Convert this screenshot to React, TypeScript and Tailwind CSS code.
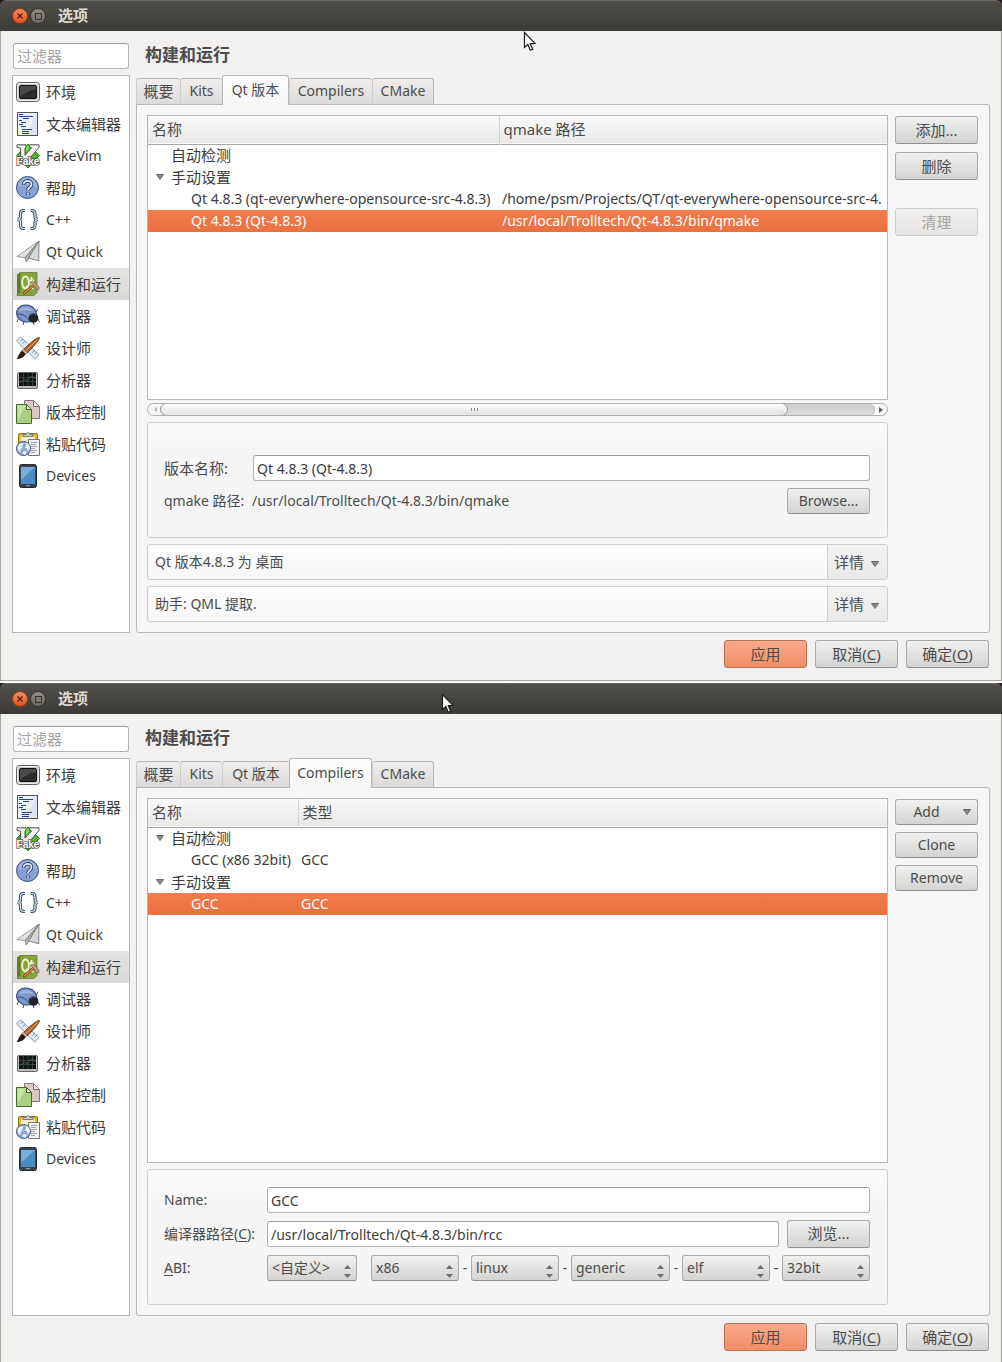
import { useState } from 'react'
import { useId } from 'react'
import type { ReactNode } from 'react'

/* ---------- sidebar icons ---------- */

const svgBase = { width: 24, height: 24, viewBox: '0 0 24 24', 'aria-hidden': true, className: 'shrink-0' } as const

function MonitorIcon() {
  return (
    <svg {...svgBase}>
      <rect x="0.5" y="2.5" width="23" height="19" rx="3" fill="#c9c9c9" stroke="#5d5d5f" />
      <rect x="1.5" y="3.5" width="21" height="17" rx="2" fill="none" stroke="#f1f1f1" />
      <rect x="3.5" y="5.5" width="17" height="13" rx="1.5" fill="#2c2c2c" stroke="#111" />
      <path d="M4 6h16v3C14 10 8 13 4 17z" fill="#5b5b5b" opacity=".65" />
    </svg>
  )
}

function EditorIcon() {
  return (
    <svg {...svgBase}>
      <rect x="1.5" y="0.5" width="20" height="23" fill="#ecf0f7" stroke="#50545c" />
      <path d="M21 1v22H9z" fill="#d3dbe9" opacity=".6" />
      <path
        d="M3 2.5h4M3 4.5h14M7 6.5h6M3 8.5h3M5 10.5h5M3 12.5h4M5 14.500h5M6 17.500h10M6 19.500h7M6 21.500h7"
        stroke="#24438a"
        fill="none"
      />
    </svg>
  )
}

function VimIcon() {
  return (
    <svg {...svgBase}>
      <path d="M12 0l11.500 11.500L12 24 .5 11.500z" fill="#4db52b" stroke="#1e5a14" strokeWidth=".8" />
      <path d="M11 1l3 2-4 6V2z" fill="#7be04a" />
      <path
        d="M1 .8h9v2.600l-1 .8v7l6.500-7.400-1.900-.4V.8h9.400v2.600L9 20H4.600V4.200L1 3.400z"
        fill="#efefef"
        stroke="#4c5250"
      />
      <text
        x="12"
        y="21"
        textAnchor="middle"
        fontFamily="Liberation Sans"
        fontSize="10"
        fontWeight="bold"
        fill="#fff"
        stroke="#565b58"
        strokeWidth="1.600"
        paintOrder="stroke"
      >
        Fake
      </text>
    </svg>
  )
}

function HelpIcon() {
  return (
    <svg {...svgBase}>
      <circle cx="11.500" cy="11.500" r="11" fill="#86a0d3" stroke="#3a4d7c" />
      <path d="M2 11a9.500 9.500 0 0 1 19 0c-6-2-12-2-19 0z" fill="#a9bde4" opacity=".7" />
      <path
        d="M7.500 9c0-5.500 8-5.500 8-.8 0 3-3.500 3-3.500 6M12 16.500v2.500"
        fill="none"
        stroke="#2b3c66"
        strokeWidth="3.600"
      />
      <path
        d="M7.500 8.500c.5-5 8-4.800 8-.3 0 3-3.500 3-3.500 6M12 16.800v1.900"
        fill="none"
        stroke="#dfe8f8"
        strokeWidth="1.800"
      />
    </svg>
  )
}

function BracesIcon() {
  const d =
    'M9 2.500H7.500C5 2.500 4.500 4 4.500 6v2.500c0 2-.8 3-3 3 2.200 0 3 1 3 3V17c0 2 .5 3.500 3 3.500H9M14.500 2.500H16c2.500 0 3 1.500 3 3.500v2.500c0 2 .8 3 3 3-2.200 0-3 1-3 3V17c0 2-.5 3.500-3 3.500h-1.500'
  return (
    <svg {...svgBase}>
      <path d={d} fill="none" stroke="#3c5576" strokeWidth="3.200" />
      <path d={d} fill="none" stroke="#d3dfee" strokeWidth="1.200" />
    </svg>
  )
}

function PlaneIcon() {
  return (
    <svg {...svgBase}>
      <path d="M23 1L.8 16.500l8.400 1.200z" fill="#e2e2e2" stroke="#8a8a8a" strokeWidth=".8" />
      <path d="M23 1L9.200 17.700l1 4.300 2.800-3.800z" fill="#b2b2b2" stroke="#777" strokeWidth=".8" />
      <path d="M23 1L12.500 18 22.800 20.800z" fill="#d6d6d6" stroke="#6f6f6f" strokeWidth=".8" />
    </svg>
  )
}

function BuildIcon() {
  return (
    <svg {...svgBase}>
      <path d="M1 2.500L4 .5v20l-3 3z" fill="#5f7e25" />
      <path d="M4 .5h17v20l-3 3H1l3-3z" fill="#86a63c" stroke="#587425" strokeWidth=".7" />
      <ellipse cx="9.500" cy="10.500" rx="3.300" ry="6" fill="none" stroke="#f3f4dc" strokeWidth="1.800" />
      <path d="M10 14l2.500 3.500M15.500 5v10c0 1.500 1 1.500 2 1.500M13.500 8.500h4.500" fill="none" stroke="#f3f4dc" strokeWidth="1.800" />
      <path d="M8.500 21l9-8" stroke="#6b3a12" strokeWidth="3" strokeLinecap="round" />
      <path d="M8.500 21l9-8" stroke="#d98e48" strokeWidth="1.600" strokeLinecap="round" />
      <path d="M14.500 10.500l2-1.500 6.500 6-.3 2.800-2-.3-1.700-3z" fill="#c6a487" stroke="#6d5646" strokeWidth=".7" />
    </svg>
  )
}

function BugIcon() {
  return (
    <svg {...svgBase}>
      <path d="M3 13l-2 5M8 17l-1 4M20 8l2-3M22 15l1.500 3M17 18l1 3" stroke="#4a4a4a" fill="none" />
      <ellipse cx="10.500" cy="9.500" rx="10" ry="8.500" transform="rotate(14 10.500 9.500)" fill="#7c98cb" stroke="#2f4675" />
      <path d="M3 7c3-5 10-5 15 0-6-1-9-1-15 0z" fill="#a9bde2" opacity=".8" />
      <path d="M1.500 10c6 0 9 2 12 7" fill="none" stroke="#2f4675" />
      <circle cx="17.500" cy="14" r="4.800" fill="#20242e" />
      <path d="M14 12c1-2.500 4-3 6-1" stroke="#5d6982" fill="none" />
    </svg>
  )
}

function DesignIcon() {
  return (
    <svg {...svgBase}>
      <path d="M4.500.8L23 18.500 18.800 23 .5 5z" fill="#dfe7f2" stroke="#8290a8" strokeWidth=".9" />
      <path d="M6.500 3L5 4.500M9 5.500L7 7.500M16 12l-1.500 1.500M18.500 14.500l-2 2M20.500 16.500L19 18" stroke="#64748f" />
      <path d="M23.500 1.500C23 5 16 12 11 17l-3.500-3.500C12 9 20 1.500 23.500 1.500z" fill="#b2622a" stroke="#54270d" strokeWidth=".8" />
      <path d="M21.500 3.500L10 14.500" stroke="#eba86c" />
      <path d="M7.500 13l3.500 3.500-1.500 1.700-3.500-3.500z" fill="#c8c8c8" stroke="#555" strokeWidth=".6" />
      <path d="M6 14.500l3.700 3.500C8 21.500 4.500 23 .5 23c2-2.500 2.500-6 5.500-8.500z" fill="#2b1a10" />
    </svg>
  )
}

function AnalyzerIcon() {
  return (
    <svg {...svgBase}>
      <rect x="1.500" y="4.500" width="20" height="16" rx="1.500" fill="#bdbdbd" stroke="#666" />
      <rect x="3" y="5" width="17" height="13" fill="#101413" />
      <path d="M7.500 5v13M12 5v13M16.500 5v13M3 9.500h17M3 13.500h17" stroke="#3c4a46" strokeWidth=".8" />
      <path d="M4 15l4-4 3 2 4-5 5 2" stroke="#4c665d" strokeWidth=".8" fill="none" />
    </svg>
  )
}

function VersionIcon() {
  return (
    <svg {...svgBase}>
      <path d="M8.500.5h9l6 6v12h-15z" fill="#dbc5c5" stroke="#8b7474" />
      <path d="M17.500.5v6h6z" fill="#f3e8e8" stroke="#8b7474" />
      <path d="M.5 4.500h10l5 5v14H.5z" fill="#a9d080" stroke="#456b2a" />
      <path d="M1.500 5.500h8L2 20z" fill="#cde9ae" opacity=".8" />
      <path d="M10.500 4.500v5h5z" fill="#e5f5d4" stroke="#456b2a" />
    </svg>
  )
}

function PasteIcon() {
  return (
    <svg {...svgBase}>
      <rect x="2.500" y="1.500" width="19" height="20" rx="1.500" fill="#e5b733" stroke="#92701b" />
      <rect x="5" y="4.500" width="14" height="14" fill="#fbeec2" />
      <path d="M7 4.500V2.500h3c0-2.500 4-2.500 4 0h3v2z" fill="#c9cbd0" stroke="#646870" strokeWidth=".8" />
      <path d="M12.500 7.500h11v16h-11z" fill="#f1f1f1" stroke="#777" />
      <path d="M15 10.500h6M15 12.500h5M15 14.500h6M15 16.500h4M15 18.500h6M15 20.500h4" stroke="#a3a3a3" />
      <circle cx="7.500" cy="16.500" r="7" fill="#8ea9cf" stroke="#3e567e" />
      <path
        d="M1.500 15c1-3 3-4 5-4l1 2-2 1 1 2-2 1v3l-2-1zM9.500 10.500c3 1 4.500 3 4.500 6l-2 3-1-3-2-1 1-2zM6 21l2-2 3 1-2 3z"
        fill="#eef3f9"
      />
    </svg>
  )
}

function DeviceIcon() {
  return (
    <svg {...svgBase}>
      <rect x="3.500" y=".5" width="17" height="23" rx="2" fill="#39434f" stroke="#252b33" />
      <rect x="5" y="3" width="14" height="17" fill="#4a8cc4" />
      <path d="M5 3h14L5 16z" fill="#8abbe2" opacity=".7" />
      <path d="M10 21.700h4" stroke="#9aa4b0" />
    </svg>
  )
}

const categories: { label: string; icon: () => ReactNode }[] = [
  { label: '环境', icon: MonitorIcon },
  { label: '文本编辑器', icon: EditorIcon },
  { label: 'FakeVim', icon: VimIcon },
  { label: '帮助', icon: HelpIcon },
  { label: 'C++', icon: BracesIcon },
  { label: 'Qt Quick', icon: PlaneIcon },
  { label: '构建和运行', icon: BuildIcon },
  { label: '调试器', icon: BugIcon },
  { label: '设计师', icon: DesignIcon },
  { label: '分析器', icon: AnalyzerIcon },
  { label: '版本控制', icon: VersionIcon },
  { label: '粘贴代码', icon: PasteIcon },
  { label: 'Devices', icon: DeviceIcon },
]

/* ---------- small parts ---------- */

function Triangle() {
  return (
    <svg width="8" height="6" viewBox="0 0 8 6" aria-hidden className="shrink-0">
      <path d="M.5.5h7L4 5.500z" fill="#8b8b89" stroke="#5c5c5a" strokeWidth=".9" />
    </svg>
  )
}

function Pointer({ className }: { className: string }) {
  return (
    <svg width="14" height="21" viewBox="0 0 14 21" aria-hidden className={`pointer-events-none absolute ${className}`}>
      <path d="M1.500 1.500v15l3.300-3 2.500 5.700 2.400-1-2.500-5.500 4.800-.3z" fill="#fff" stroke="#1c1c1c" strokeWidth="1.200" />
    </svg>
  )
}

const buttonLook = 'rounded-[3px] border bg-linear-to-b text-[#4c4c4c]'
const greyLook = 'border-[#a9a9a8] border-b-[#8f8f8d] from-[#f1f1f0] to-[#d3d3d2]'

function Button({
  children,
  tone = 'grey',
  className = 'h-7 text-[15px]',
}: {
  children: ReactNode
  tone?: 'grey' | 'orange' | 'off'
  className?: string
}) {
  const tones = {
    grey: greyLook,
    orange: 'border-[#b27457] from-[#f9aa8c] to-[#f18d65]',
    off: 'border-[#cfcecd] from-[#f0efee] to-[#e6e5e4] text-[#a5a5a4]',
  }
  return (
    <button
      type="button"
      disabled={tone === 'off'}
      className={`flex w-[83px] shrink-0 items-center justify-center whitespace-nowrap ${buttonLook} ${tones[tone]} ${className}`}
    >
      {children}
    </button>
  )
}

function TextField({ id, value, className }: { id: string; value: string; className: string }) {
  return (
    <input
      id={id}
      type="text"
      defaultValue={value}
      className={`h-[26px] min-w-0 rounded-[3px] border border-[#b5b3b1] border-t-[#9f9d9b] bg-white px-[3px] text-sm text-[#3c3c3c] outline-none ${className}`}
    />
  )
}

function Combo({ label, value, className }: { label: string; value: string; className: string }) {
  return (
    <span className={`relative ${className}`}>
      <select
        aria-label={label}
        defaultValue={value}
        className={`h-[26px] w-full appearance-none pr-4 pl-1 text-sm outline-none ${buttonLook} ${greyLook}`}
      >
        <option>{value}</option>
      </select>
      <svg width="7" height="13" viewBox="0 0 7 13" aria-hidden className="pointer-events-none absolute right-1.5 bottom-[3px]">
        <path d="M3.500 0L7 4H0zM3.500 13L7 9H0z" fill="#6e6e6c" />
      </svg>
    </span>
  )
}

function GroupBox({ children, className }: { children: ReactNode; className: string }) {
  return (
    <div className={`flex flex-col rounded-[3px] border border-[#d0cfce] bg-linear-to-b from-[#fbfbfb] to-[#f5f5f5] to-30% pr-[17px] pl-4 text-[#4c4c4c] ${className}`}>
      {children}
    </div>
  )
}

/* ---------- tree table ---------- */

type Row = { name: string; value?: string; kind: 'group' | 'empty' | 'leaf' | 'selected' }

function Tree({ heads, rows, firstCol, className }: { heads: string[]; rows: Row[]; firstCol: string; className: string }) {
  return (
    <div className={`overflow-hidden border border-[#b9b7b5] bg-white ${className}`}>
      <table className="w-full table-fixed border-collapse text-left text-sm whitespace-nowrap text-[#3c3c3c]">
        <colgroup>
          <col className={firstCol} />
          <col />
        </colgroup>
        <thead>
          <tr className="h-7 border-b border-[#a9a7a5] bg-linear-to-b from-[#f9f9f9] to-[#e9e8e7] text-[#4c4c4c]">
            <th className="border-r border-[#d2d1cf] p-0 pl-1 text-[15px] font-normal">{heads[0]}</th>
            <th className="p-0 pl-1 text-[15px] font-normal">{heads[1]}</th>
          </tr>
        </thead>
        <tbody>
          {rows.map((row, i) => (
            <tr
              key={i}
              className={row.kind === 'selected' ? 'h-[22px] bg-linear-to-b from-[#f27c4c] to-[#eb7040] text-white' : 'h-[22px]'}
            >
              {row.kind === 'group' || row.kind === 'empty' ? (
                <td className="p-0 text-[15px] leading-5">
                  <span className="flex items-center">
                    <span className="flex w-[23px] pl-2">{row.kind === 'group' && <Triangle />}</span>
                    {row.name}
                  </span>
                </td>
              ) : (
                <td className="p-0 pl-[43px] leading-[22px]">{row.name}</td>
              )}
              <td className="overflow-hidden p-0 pl-[3px] leading-[22px]">{row.value}</td>
            </tr>
          ))}
        </tbody>
      </table>
    </div>
  )
}

/* ---------- dialog frame ---------- */

const tabNames = [
  { label: '概要', width: 'w-[44px]' },
  { label: 'Kits', width: 'w-[42px]' },
  { label: 'Qt 版本', width: 'w-[67px]' },
  { label: 'Compilers', width: 'w-[83px]' },
  { label: 'CMake', width: 'w-[62px]' },
]

function Dialog({ active, children }: { active: string; children: ReactNode }) {
  const [filter, setFilter] = useState('')
  return (
    <section className="bg-[#241a26]">
      <header className="flex h-[31px] items-center rounded-t-md border-t border-[#6a6862] bg-linear-to-b from-[#504f49] to-[#3c3b37] pl-3">
        <button type="button" aria-label="关闭" className="flex size-4 items-center justify-center rounded-full border border-[#8d3a1c] bg-linear-to-b from-[#f58a62] to-[#e3501f]">
          <svg width="6" height="6" viewBox="0 0 6 6" aria-hidden>
            <path d="M.5.5l5 5M5.500.5l-5 5" stroke="#4b2010" strokeWidth="1.200" />
          </svg>
        </button>
        <button type="button" aria-label="最大化" className="ml-0.5 flex size-4 items-center justify-center rounded-full border border-[#35342f] bg-linear-to-b from-[#8f8d85] to-[#6b6962]">
          <span className="size-[7px] border border-[#35342f]" />
        </button>
        <h1 className="ml-3 pb-0.5 text-[15px] font-bold text-[#dfdbd2]">选项</h1>
      </header>
      <div className="flex flex-col border-x border-b border-[#a5a39f] bg-[#f2f1f0] px-[11px] pt-3 pb-3">
        <div className="flex gap-1.5">
          <aside className="flex w-[118px] shrink-0 flex-col">
            <input
              aria-label="过滤器"
              type="text"
              value={filter}
              onChange={(e) => setFilter(e.target.value)}
              placeholder="过滤器"
              className="mx-px h-[26px] w-[116px] rounded-[3px] border border-[#b5b3b1] border-t-[#9f9d9b] bg-white px-[3px] pb-0.5 font-['Noto_Sans_CJK_SC',sans-serif] text-[15px] leading-[22px] outline-none placeholder:text-[#a3a2a1]"
            />
            <nav className="mt-1.5 flex-1 border border-[#b9b7b5] bg-white">
              <ul>
                {categories.map(({ label, icon: Icon }) => (
                  <li key={label}>
                    <a
                      href="#"
                      className={`flex h-8 items-center gap-1.5 pl-[3px] whitespace-nowrap text-[#3c3c3c] ${
                        /^[A-Z]/.test(label) ? 'text-sm' : 'text-[15px]'
                      } ${label === '构建和运行' ? 'bg-linear-to-b from-[#e6e5e3] to-[#d9d7d5]' : ''}`}
                    >
                      <Icon />
                      {label}
                    </a>
                  </li>
                ))}
              </ul>
            </nav>
          </aside>
          <main className="flex min-w-0 flex-1 flex-col">
            <h2 className="h-8 pl-[9px] text-[17px] leading-6 font-bold text-[#4c4c4c]">构建和运行</h2>
            <div role="tablist" className="flex items-end">
              {tabNames.map(({ label, width }) => (
                <button
                  key={label}
                  type="button"
                  role="tab"
                  aria-selected={label === active}
                  className={`rounded-t-[3px] border border-[#b9b7b5] bg-linear-to-b pb-px whitespace-nowrap text-[#4c4c4c] ${width} ${
                    label === '概要' ? 'text-[15px]' : 'text-sm'
                  } ${
                    label === active
                      ? 'relative -mb-px h-[30px] border-b-0 from-[#fdfdfd] to-[#f6f6f6]'
                      : 'h-[26px] border-r-0 border-b-0 border-l-[#cfcdcb] from-[#efeeed] to-[#dcdad8] last:border-r'
                  }`}
                >
                  {label}
                </button>
              ))}
            </div>
            <div role="tabpanel" className="flex gap-[7px] rounded-[3px] rounded-tl-none border border-[#b9b7b5] bg-[#f6f6f6] p-2.5">
              {children}
            </div>
          </main>
        </div>
        <footer className="mt-[7px] flex justify-end gap-2 pr-px">
          <Button tone="orange">应用</Button>
          <Button>
            取消(<u className="underline-offset-2">C</u>)
          </Button>
          <Button>
            确定(<u className="underline-offset-2">O</u>)
          </Button>
        </footer>
      </div>
    </section>
  )
}

/* ---------- pages ---------- */

function ScrollBar() {
  return (
    <div className="mt-[3px] flex h-[13px] items-stretch overflow-hidden rounded-full border border-[#b3b1af] bg-[#f6f6f5]">
      <button type="button" aria-label="向左滚动" className="flex w-3 shrink-0 items-center justify-center pl-0.5">
        <svg width="3" height="5" viewBox="0 0 3 5" aria-hidden><path d="M3 0v5L0 2.500z" fill="#b0b0ae" /></svg>
      </button>
      <div className="flex flex-1 rounded-full border-r border-[#b3b1af] bg-linear-to-b from-[#cfcecc] to-[#dddcdb]">
        <div className="-my-px flex w-[88%] items-center justify-center gap-0.5 rounded-full border border-[#9b9997] bg-linear-to-b from-[#fdfdfd] to-[#e3e2e0]">
          <i className="h-[3px] w-px bg-[#8f8f8d]" />
          <i className="h-[3px] w-px bg-[#8f8f8d]" />
          <i className="h-[3px] w-px bg-[#8f8f8d]" />
        </div>
      </div>
      <button type="button" aria-label="向右滚动" className="flex w-3 shrink-0 items-center justify-center">
        <svg width="4" height="6" viewBox="0 0 4 6" aria-hidden><path d="M0 0v6l4-3z" fill="#5c5c5a" /></svg>
      </button>
    </div>
  )
}

function DetailsBar({ children }: { children: ReactNode }) {
  return (
    <div className="mt-1.5 flex h-9 items-stretch rounded-[3px] border border-[#d0cfce] bg-linear-to-b from-[#fcfcfc] to-[#f7f7f7] text-[#4c4c4c]">
      <p className="flex flex-1 items-center pl-[7px] text-sm">{children}</p>
      <button type="button" className="flex w-[60px] items-center gap-[7px] border-l border-[#d0cfce] bg-linear-to-b from-[#f2f2f2] to-[#e9e9e9] pl-1.5 text-[15px]">
        详情
        <span className="pt-1"><Triangle /></span>
      </button>
    </div>
  )
}

function QtVersions() {
  const nameId = useId()
  return (
    <Dialog active="Qt 版本">
      <div className="flex min-w-0 flex-1 flex-col">
        <Tree
          className="h-[285px]"
          firstCol="w-[351px]"
          heads={['名称', 'qmake 路径']}
          rows={[
            { kind: 'empty', name: '自动检测' },
            { kind: 'group', name: '手动设置' },
            {
              kind: 'leaf',
              name: 'Qt 4.8.3 (qt-everywhere-opensource-src-4.8.3)',
              value: '/home/psm/Projects/QT/qt-everywhere-opensource-src-4.',
            },
            { kind: 'selected', name: 'Qt 4.8.3 (Qt-4.8.3)', value: '/usr/local/Trolltech/Qt-4.8.3/bin/qmake' },
          ]}
        />
        <ScrollBar />
        <GroupBox className="mt-1.5 h-[116px] gap-[7px] pt-8">
          <div className="flex items-center">
            <label htmlFor={nameId} className="w-[89px] shrink-0 text-[15px]">版本名称:</label>
            <TextField id={nameId} value="Qt 4.8.3 (Qt-4.8.3)" className="flex-1" />
          </div>
          <div className="flex items-center text-sm">
            <span className="w-[88px] shrink-0">qmake 路径:</span>
            <span className="flex-1">/usr/local/Trolltech/Qt-4.8.3/bin/qmake</span>
            <Button className="h-[26px] text-sm">Browse...</Button>
          </div>
        </GroupBox>
        <DetailsBar>Qt 版本4.8.3 为 桌面</DetailsBar>
        <DetailsBar>助手: QML 提取.</DetailsBar>
      </div>
      <div className="flex flex-col gap-2 pt-px pr-px">
        <Button>添加...</Button>
        <Button>删除</Button>
        <div className="mt-5">
          <Button tone="off">清理</Button>
        </div>
      </div>
    </Dialog>
  )
}

function Compilers() {
  const nameId = useId()
  const pathId = useId()
  return (
    <Dialog active="Compilers">
      <div className="flex min-w-0 flex-1 flex-col">
        <Tree
          className="h-[365px]"
          firstCol="w-[150px]"
          heads={['名称', '类型']}
          rows={[
            { kind: 'group', name: '自动检测' },
            { kind: 'leaf', name: 'GCC (x86 32bit)', value: 'GCC' },
            { kind: 'group', name: '手动设置' },
            { kind: 'selected', name: 'GCC', value: 'GCC' },
          ]}
        />
        <GroupBox className="mt-1.5 h-[136px] gap-[7px] pt-[17px] text-sm">
          <div className="flex items-center">
            <label htmlFor={nameId} className="w-[103px] shrink-0">Name:</label>
            <TextField id={nameId} value="GCC" className="flex-1" />
          </div>
          <div className="flex items-center">
            <label htmlFor={pathId} className="w-[103px] shrink-0 whitespace-nowrap">
              编译器路径(<u className="underline-offset-2">C</u>):
            </label>
            <TextField id={pathId} value="/usr/local/Trolltech/Qt-4.8.3/bin/rcc" className="mr-2 flex-1" />
            <Button>浏览...</Button>
          </div>
          <div className="flex items-center">
            <span className="w-[103px] shrink-0">
              <u className="underline-offset-2">A</u>BI:
            </span>
            <Combo label="ABI" value="<自定义>" className="mr-3.5 w-[90px]" />
            <Combo label="架构" value="x86" className="w-[88px]" />
            <span className="w-3 text-center">-</span>
            <Combo label="系统" value="linux" className="w-[88px]" />
            <span className="w-3 text-center">-</span>
            <Combo label="系统类型" value="generic" className="w-[99px]" />
            <span className="w-3 text-center">-</span>
            <Combo label="格式" value="elf" className="w-[88px]" />
            <span className="w-3 text-center">-</span>
            <Combo label="字长" value="32bit" className="w-[88px]" />
          </div>
        </GroupBox>
      </div>
      <div className="flex flex-col gap-[7px] pt-px pr-px">
        <Button className="h-[26px] gap-[23px] pl-[11px] text-sm">
          Add
          <Triangle />
        </Button>
        <Button className="h-[26px] text-sm">Clone</Button>
        <Button className="h-[26px] text-sm">Remove</Button>
      </div>
    </Dialog>
  )
}

export default function App() {
  return (
    <div className="flex flex-col gap-0.5 bg-white font-['Noto_Sans','Noto_Sans_CJK_SC',sans-serif]">
      <div className="relative">
        <QtVersions />
        <Pointer className="top-[31px] left-[523px]" />
      </div>
      <div className="relative">
        <Compilers />
        <Pointer className="top-[10px] left-[441px]" />
      </div>
    </div>
  )
}
